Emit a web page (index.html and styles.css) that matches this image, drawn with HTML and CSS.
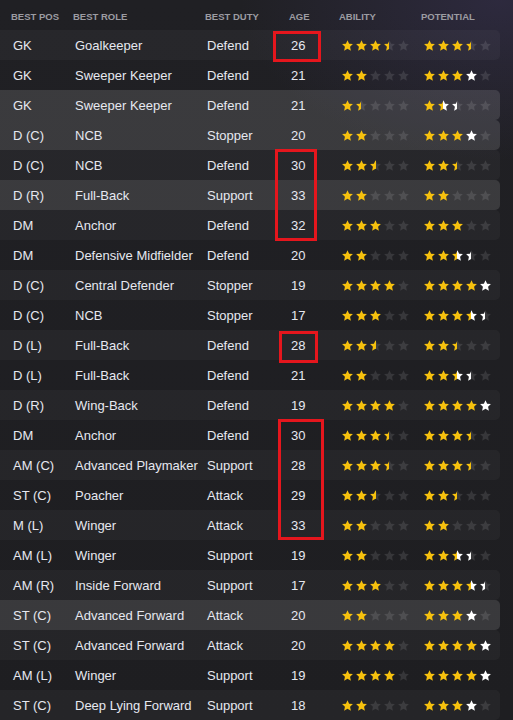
FILE: index.html
```html
<!DOCTYPE html>
<html>
<head>
<meta charset="utf-8">
<link rel="stylesheet" href="styles.css">
</head>
<body>
<svg class="defs" width="0" height="0" aria-hidden="true">
  <defs>
    <symbol id="s" viewBox="0 0 12 12"><polygon points="6,0.2 7.75,4.0 11.9,4.45 8.8,7.25 9.7,11.6 6,9.45 2.3,11.6 3.2,7.25 0.1,4.45 4.25,4.0"/></symbol>
    <linearGradient id="gyg" x1="0" x2="1" y1="0" y2="0"><stop offset="0.5" stop-color="#f6c10e"/><stop offset="0.5" stop-color="#ffffff" stop-opacity="0.11"/></linearGradient>
    <linearGradient id="gyw" x1="0" x2="1" y1="0" y2="0"><stop offset="0.5" stop-color="#f6c10e"/><stop offset="0.5" stop-color="#ffffff"/></linearGradient>
    <linearGradient id="gwg" x1="0" x2="1" y1="0" y2="0"><stop offset="0.5" stop-color="#ffffff"/><stop offset="0.5" stop-color="#ffffff" stop-opacity="0.11"/></linearGradient>
  </defs>
</svg>
<main class="table">
  <div class="head">
    <span>Best Pos</span><span>Best Role</span><span>Best Duty</span><span>Age</span><span>Ability</span><span>Potential</span>
  </div>

  <div class="row stripe"><span>GK</span><span>Goalkeeper</span><span>Defend</span><span>26</span>
    <span class="stars"><svg class="s y"><use href="#s"/></svg><svg class="s y"><use href="#s"/></svg><svg class="s y"><use href="#s"/></svg><svg class="s yg"><use href="#s"/></svg><svg class="s g"><use href="#s"/></svg></span>
    <span class="stars"><svg class="s y"><use href="#s"/></svg><svg class="s y"><use href="#s"/></svg><svg class="s y"><use href="#s"/></svg><svg class="s yg"><use href="#s"/></svg><svg class="s g"><use href="#s"/></svg></span></div>

  <div class="row"><span>GK</span><span>Sweeper Keeper</span><span>Defend</span><span>21</span>
    <span class="stars"><svg class="s y"><use href="#s"/></svg><svg class="s y"><use href="#s"/></svg><svg class="s g"><use href="#s"/></svg><svg class="s g"><use href="#s"/></svg><svg class="s g"><use href="#s"/></svg></span>
    <span class="stars"><svg class="s y"><use href="#s"/></svg><svg class="s y"><use href="#s"/></svg><svg class="s y"><use href="#s"/></svg><svg class="s w"><use href="#s"/></svg><svg class="s g"><use href="#s"/></svg></span></div>

  <div class="row hl"><span>GK</span><span>Sweeper Keeper</span><span>Defend</span><span>21</span>
    <span class="stars"><svg class="s y"><use href="#s"/></svg><svg class="s yg"><use href="#s"/></svg><svg class="s g"><use href="#s"/></svg><svg class="s g"><use href="#s"/></svg><svg class="s g"><use href="#s"/></svg></span>
    <span class="stars"><svg class="s y"><use href="#s"/></svg><svg class="s yw"><use href="#s"/></svg><svg class="s wg"><use href="#s"/></svg><svg class="s g"><use href="#s"/></svg><svg class="s g"><use href="#s"/></svg></span></div>

  <div class="row hl"><span>D (C)</span><span>NCB</span><span>Stopper</span><span>20</span>
    <span class="stars"><svg class="s y"><use href="#s"/></svg><svg class="s y"><use href="#s"/></svg><svg class="s g"><use href="#s"/></svg><svg class="s g"><use href="#s"/></svg><svg class="s g"><use href="#s"/></svg></span>
    <span class="stars"><svg class="s y"><use href="#s"/></svg><svg class="s y"><use href="#s"/></svg><svg class="s y"><use href="#s"/></svg><svg class="s w"><use href="#s"/></svg><svg class="s g"><use href="#s"/></svg></span></div>

  <div class="row stripe"><span>D (C)</span><span>NCB</span><span>Defend</span><span>30</span>
    <span class="stars"><svg class="s y"><use href="#s"/></svg><svg class="s y"><use href="#s"/></svg><svg class="s yg"><use href="#s"/></svg><svg class="s g"><use href="#s"/></svg><svg class="s g"><use href="#s"/></svg></span>
    <span class="stars"><svg class="s y"><use href="#s"/></svg><svg class="s y"><use href="#s"/></svg><svg class="s yg"><use href="#s"/></svg><svg class="s g"><use href="#s"/></svg><svg class="s g"><use href="#s"/></svg></span></div>

  <div class="row hl"><span>D (R)</span><span>Full-Back</span><span>Support</span><span>33</span>
    <span class="stars"><svg class="s y"><use href="#s"/></svg><svg class="s y"><use href="#s"/></svg><svg class="s g"><use href="#s"/></svg><svg class="s g"><use href="#s"/></svg><svg class="s g"><use href="#s"/></svg></span>
    <span class="stars"><svg class="s y"><use href="#s"/></svg><svg class="s y"><use href="#s"/></svg><svg class="s g"><use href="#s"/></svg><svg class="s g"><use href="#s"/></svg><svg class="s g"><use href="#s"/></svg></span></div>

  <div class="row stripe"><span>DM</span><span>Anchor</span><span>Defend</span><span>32</span>
    <span class="stars"><svg class="s y"><use href="#s"/></svg><svg class="s y"><use href="#s"/></svg><svg class="s y"><use href="#s"/></svg><svg class="s g"><use href="#s"/></svg><svg class="s g"><use href="#s"/></svg></span>
    <span class="stars"><svg class="s y"><use href="#s"/></svg><svg class="s y"><use href="#s"/></svg><svg class="s y"><use href="#s"/></svg><svg class="s g"><use href="#s"/></svg><svg class="s g"><use href="#s"/></svg></span></div>

  <div class="row"><span>DM</span><span>Defensive Midfielder</span><span>Defend</span><span>20</span>
    <span class="stars"><svg class="s y"><use href="#s"/></svg><svg class="s y"><use href="#s"/></svg><svg class="s g"><use href="#s"/></svg><svg class="s g"><use href="#s"/></svg><svg class="s g"><use href="#s"/></svg></span>
    <span class="stars"><svg class="s y"><use href="#s"/></svg><svg class="s y"><use href="#s"/></svg><svg class="s yw"><use href="#s"/></svg><svg class="s wg"><use href="#s"/></svg><svg class="s g"><use href="#s"/></svg></span></div>

  <div class="row stripe"><span>D (C)</span><span>Central Defender</span><span>Stopper</span><span>19</span>
    <span class="stars"><svg class="s y"><use href="#s"/></svg><svg class="s y"><use href="#s"/></svg><svg class="s y"><use href="#s"/></svg><svg class="s y"><use href="#s"/></svg><svg class="s g"><use href="#s"/></svg></span>
    <span class="stars"><svg class="s y"><use href="#s"/></svg><svg class="s y"><use href="#s"/></svg><svg class="s y"><use href="#s"/></svg><svg class="s y"><use href="#s"/></svg><svg class="s w"><use href="#s"/></svg></span></div>

  <div class="row"><span>D (C)</span><span>NCB</span><span>Stopper</span><span>17</span>
    <span class="stars"><svg class="s y"><use href="#s"/></svg><svg class="s y"><use href="#s"/></svg><svg class="s y"><use href="#s"/></svg><svg class="s g"><use href="#s"/></svg><svg class="s g"><use href="#s"/></svg></span>
    <span class="stars"><svg class="s y"><use href="#s"/></svg><svg class="s y"><use href="#s"/></svg><svg class="s y"><use href="#s"/></svg><svg class="s yw"><use href="#s"/></svg><svg class="s wg"><use href="#s"/></svg></span></div>

  <div class="row stripe"><span>D (L)</span><span>Full-Back</span><span>Defend</span><span>28</span>
    <span class="stars"><svg class="s y"><use href="#s"/></svg><svg class="s y"><use href="#s"/></svg><svg class="s yg"><use href="#s"/></svg><svg class="s g"><use href="#s"/></svg><svg class="s g"><use href="#s"/></svg></span>
    <span class="stars"><svg class="s y"><use href="#s"/></svg><svg class="s y"><use href="#s"/></svg><svg class="s yg"><use href="#s"/></svg><svg class="s g"><use href="#s"/></svg><svg class="s g"><use href="#s"/></svg></span></div>

  <div class="row"><span>D (L)</span><span>Full-Back</span><span>Defend</span><span>21</span>
    <span class="stars"><svg class="s y"><use href="#s"/></svg><svg class="s y"><use href="#s"/></svg><svg class="s g"><use href="#s"/></svg><svg class="s g"><use href="#s"/></svg><svg class="s g"><use href="#s"/></svg></span>
    <span class="stars"><svg class="s y"><use href="#s"/></svg><svg class="s y"><use href="#s"/></svg><svg class="s yw"><use href="#s"/></svg><svg class="s wg"><use href="#s"/></svg><svg class="s g"><use href="#s"/></svg></span></div>

  <div class="row stripe"><span>D (R)</span><span>Wing-Back</span><span>Defend</span><span>19</span>
    <span class="stars"><svg class="s y"><use href="#s"/></svg><svg class="s y"><use href="#s"/></svg><svg class="s y"><use href="#s"/></svg><svg class="s y"><use href="#s"/></svg><svg class="s g"><use href="#s"/></svg></span>
    <span class="stars"><svg class="s y"><use href="#s"/></svg><svg class="s y"><use href="#s"/></svg><svg class="s y"><use href="#s"/></svg><svg class="s y"><use href="#s"/></svg><svg class="s w"><use href="#s"/></svg></span></div>

  <div class="row"><span>DM</span><span>Anchor</span><span>Defend</span><span>30</span>
    <span class="stars"><svg class="s y"><use href="#s"/></svg><svg class="s y"><use href="#s"/></svg><svg class="s y"><use href="#s"/></svg><svg class="s yg"><use href="#s"/></svg><svg class="s g"><use href="#s"/></svg></span>
    <span class="stars"><svg class="s y"><use href="#s"/></svg><svg class="s y"><use href="#s"/></svg><svg class="s y"><use href="#s"/></svg><svg class="s yg"><use href="#s"/></svg><svg class="s g"><use href="#s"/></svg></span></div>

  <div class="row stripe"><span>AM (C)</span><span>Advanced Playmaker</span><span>Support</span><span>28</span>
    <span class="stars"><svg class="s y"><use href="#s"/></svg><svg class="s y"><use href="#s"/></svg><svg class="s y"><use href="#s"/></svg><svg class="s yg"><use href="#s"/></svg><svg class="s g"><use href="#s"/></svg></span>
    <span class="stars"><svg class="s y"><use href="#s"/></svg><svg class="s y"><use href="#s"/></svg><svg class="s y"><use href="#s"/></svg><svg class="s yg"><use href="#s"/></svg><svg class="s g"><use href="#s"/></svg></span></div>

  <div class="row"><span>ST (C)</span><span>Poacher</span><span>Attack</span><span>29</span>
    <span class="stars"><svg class="s y"><use href="#s"/></svg><svg class="s y"><use href="#s"/></svg><svg class="s yg"><use href="#s"/></svg><svg class="s g"><use href="#s"/></svg><svg class="s g"><use href="#s"/></svg></span>
    <span class="stars"><svg class="s y"><use href="#s"/></svg><svg class="s y"><use href="#s"/></svg><svg class="s yg"><use href="#s"/></svg><svg class="s g"><use href="#s"/></svg><svg class="s g"><use href="#s"/></svg></span></div>

  <div class="row stripe"><span>M (L)</span><span>Winger</span><span>Attack</span><span>33</span>
    <span class="stars"><svg class="s y"><use href="#s"/></svg><svg class="s y"><use href="#s"/></svg><svg class="s g"><use href="#s"/></svg><svg class="s g"><use href="#s"/></svg><svg class="s g"><use href="#s"/></svg></span>
    <span class="stars"><svg class="s y"><use href="#s"/></svg><svg class="s y"><use href="#s"/></svg><svg class="s g"><use href="#s"/></svg><svg class="s g"><use href="#s"/></svg><svg class="s g"><use href="#s"/></svg></span></div>

  <div class="row"><span>AM (L)</span><span>Winger</span><span>Support</span><span>19</span>
    <span class="stars"><svg class="s y"><use href="#s"/></svg><svg class="s y"><use href="#s"/></svg><svg class="s g"><use href="#s"/></svg><svg class="s g"><use href="#s"/></svg><svg class="s g"><use href="#s"/></svg></span>
    <span class="stars"><svg class="s y"><use href="#s"/></svg><svg class="s y"><use href="#s"/></svg><svg class="s yw"><use href="#s"/></svg><svg class="s wg"><use href="#s"/></svg><svg class="s g"><use href="#s"/></svg></span></div>

  <div class="row stripe"><span>AM (R)</span><span>Inside Forward</span><span>Support</span><span>17</span>
    <span class="stars"><svg class="s y"><use href="#s"/></svg><svg class="s y"><use href="#s"/></svg><svg class="s y"><use href="#s"/></svg><svg class="s g"><use href="#s"/></svg><svg class="s g"><use href="#s"/></svg></span>
    <span class="stars"><svg class="s y"><use href="#s"/></svg><svg class="s y"><use href="#s"/></svg><svg class="s y"><use href="#s"/></svg><svg class="s yw"><use href="#s"/></svg><svg class="s wg"><use href="#s"/></svg></span></div>

  <div class="row hl"><span>ST (C)</span><span>Advanced Forward</span><span>Attack</span><span>20</span>
    <span class="stars"><svg class="s y"><use href="#s"/></svg><svg class="s y"><use href="#s"/></svg><svg class="s g"><use href="#s"/></svg><svg class="s g"><use href="#s"/></svg><svg class="s g"><use href="#s"/></svg></span>
    <span class="stars"><svg class="s y"><use href="#s"/></svg><svg class="s y"><use href="#s"/></svg><svg class="s y"><use href="#s"/></svg><svg class="s w"><use href="#s"/></svg><svg class="s g"><use href="#s"/></svg></span></div>

  <div class="row stripe"><span>ST (C)</span><span>Advanced Forward</span><span>Attack</span><span>20</span>
    <span class="stars"><svg class="s y"><use href="#s"/></svg><svg class="s y"><use href="#s"/></svg><svg class="s y"><use href="#s"/></svg><svg class="s y"><use href="#s"/></svg><svg class="s g"><use href="#s"/></svg></span>
    <span class="stars"><svg class="s y"><use href="#s"/></svg><svg class="s y"><use href="#s"/></svg><svg class="s y"><use href="#s"/></svg><svg class="s y"><use href="#s"/></svg><svg class="s w"><use href="#s"/></svg></span></div>

  <div class="row"><span>AM (L)</span><span>Winger</span><span>Support</span><span>19</span>
    <span class="stars"><svg class="s y"><use href="#s"/></svg><svg class="s y"><use href="#s"/></svg><svg class="s y"><use href="#s"/></svg><svg class="s y"><use href="#s"/></svg><svg class="s g"><use href="#s"/></svg></span>
    <span class="stars"><svg class="s y"><use href="#s"/></svg><svg class="s y"><use href="#s"/></svg><svg class="s y"><use href="#s"/></svg><svg class="s y"><use href="#s"/></svg><svg class="s w"><use href="#s"/></svg></span></div>

  <div class="row stripe"><span>ST (C)</span><span>Deep Lying Forward</span><span>Support</span><span>18</span>
    <span class="stars"><svg class="s y"><use href="#s"/></svg><svg class="s y"><use href="#s"/></svg><svg class="s g"><use href="#s"/></svg><svg class="s g"><use href="#s"/></svg><svg class="s g"><use href="#s"/></svg></span>
    <span class="stars"><svg class="s y"><use href="#s"/></svg><svg class="s y"><use href="#s"/></svg><svg class="s y"><use href="#s"/></svg><svg class="s w"><use href="#s"/></svg><svg class="s g"><use href="#s"/></svg></span></div>

  <div class="mark m1"></div>
  <div class="mark m2"></div>
  <div class="mark m3"></div>
  <div class="mark m4"></div>
</main>
</body>
</html>
```

FILE: styles.css
```css
html, body {
  margin: 0;
  padding: 0;
}
body {
  width: 513px;
  height: 720px;
  overflow: hidden;
  background:
    radial-gradient(ellipse 260px 160px at 500px 0px, rgba(70, 60, 110, 0.35), rgba(70, 60, 110, 0) 100%),
    linear-gradient(180deg, #202024 0%, #1e1e21 100%);
  font-family: "Liberation Sans", Arial, sans-serif;
  color: #e6e8f0;
}
.defs {
  position: absolute;
  width: 0;
  height: 0;
}
.table {
  position: relative;
  width: 500px;
  display: flex;
  flex-direction: column;
}
.head,
.row {
  display: grid;
  grid-template-columns: 62px 132px 84px 50px 82px 1fr;
  align-items: center;
  height: 30px;
}
.head {
  padding-left: 11px;
  font-size: 9.5px;
  font-weight: bold;
  text-transform: uppercase;
  color: #9c9ca2;
  padding-top: 2px;
  box-sizing: border-box;
}
.row {
  padding-left: 13px;
  font-size: 13px;
  border-radius: 0 5px 5px 0;
  white-space: nowrap;
}
.row.stripe {
  background: rgba(255, 255, 255, 0.035);
}
.row.hl {
  background: rgba(255, 255, 255, 0.12);
}
.stars {
  display: flex;
  gap: 3px;
  padding-left: 1px;
}
.s {
  width: 11px;
  height: 11px;
  display: block;
}
.y { fill: #f6c10e; }
.g { fill: rgba(255, 255, 255, 0.11); }
.w { fill: #ffffff; }
.yg { fill: url(#gyg); }
.yw { fill: url(#gyw); }
.wg { fill: url(#gwg); }

.mark {
  position: absolute;
  border: 3px solid #e5161d;
  box-sizing: border-box;
}
.m1 { left: 273px; top: 31px; width: 48px; height: 31px; }
.m2 { left: 275px; top: 149px; width: 42px; height: 92px; }
.m3 { left: 279px; top: 331px; width: 39px; height: 32px; }
.m4 { left: 278px; top: 419px; width: 46px; height: 121px; }
```
